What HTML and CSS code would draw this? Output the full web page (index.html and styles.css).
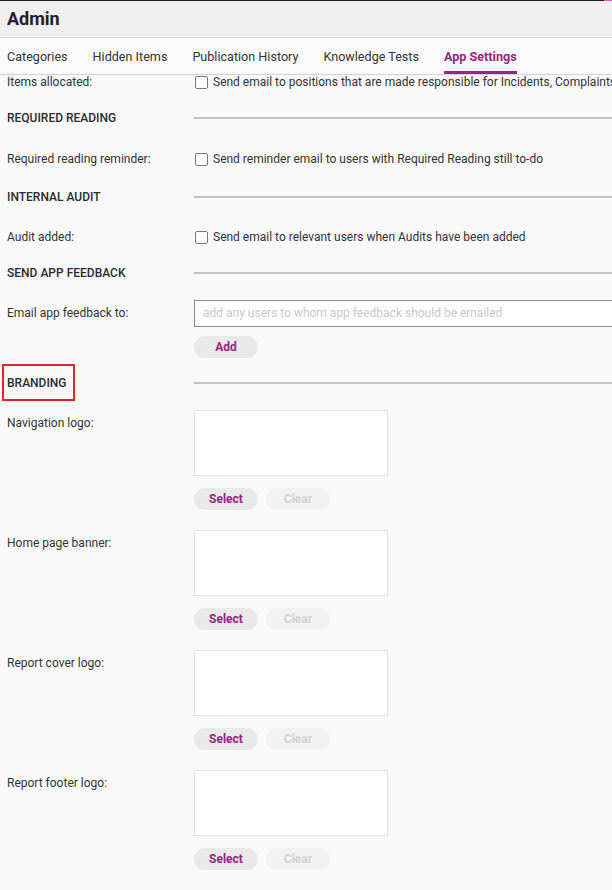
FILE: index.html
```html
<!DOCTYPE html>
<html>
<head>
  <meta charset="utf-8">
  <meta name="viewport" content="width=device-width, initial-scale=1">
  <title>Admin</title>
  <link rel="stylesheet" href="styles.css">
</head>
<body>
  <div class="topline"><div class="dark"></div><div class="pink"></div></div>
  <div class="header">Admin</div>
  <div class="tabs">
    <div class="tab">Categories</div>
    <div class="tab">Hidden Items</div>
    <div class="tab">Publication History</div>
    <div class="tab">Knowledge Tests</div>
    <div class="tab active">App Settings</div>
  </div>

  <div class="content">
    <div class="row first">
      <div class="label">Items allocated:</div>
      <label class="check"><span class="box"></span><span class="txt">Send email to positions that are made responsible for Incidents, Complaints, Hazards and Improvements</span></label>
    </div>

    <div class="heading h1"><span>REQUIRED READING</span><div class="line"></div></div>
    <div class="row r2">
      <div class="label">Required reading reminder:</div>
      <label class="check"><span class="box"></span><span class="txt">Send reminder email to users with Required Reading still to-do</span></label>
    </div>

    <div class="heading h2"><span>INTERNAL AUDIT</span><div class="line"></div></div>
    <div class="row r3">
      <div class="label">Audit added:</div>
      <label class="check"><span class="box"></span><span class="txt">Send email to relevant users when Audits have been added</span></label>
    </div>

    <div class="heading h3"><span>SEND APP FEEDBACK</span><div class="line"></div></div>
    <div class="row r4">
      <div class="label">Email app feedback to:</div>
      <div class="input">add any users to whom app feedback should be emailed</div>
    </div>
    <div class="row btnrow">
      <div></div>
      <div class="btns"><button class="btn">Add</button></div>
    </div>

    <div class="heading h4"><span class="marked">BRANDING</span><div class="line"></div></div>

    <div class="logo">
      <div class="label">Navigation logo:</div>
      <div>
        <div class="drop"></div>
        <div class="btns"><button class="btn">Select</button><button class="btn off">Clear</button></div>
      </div>
    </div>
    <div class="logo">
      <div class="label">Home page banner:</div>
      <div>
        <div class="drop"></div>
        <div class="btns"><button class="btn">Select</button><button class="btn off">Clear</button></div>
      </div>
    </div>
    <div class="logo">
      <div class="label">Report cover logo:</div>
      <div>
        <div class="drop"></div>
        <div class="btns"><button class="btn">Select</button><button class="btn off">Clear</button></div>
      </div>
    </div>
    <div class="logo">
      <div class="label">Report footer logo:</div>
      <div>
        <div class="drop"></div>
        <div class="btns"><button class="btn">Select</button><button class="btn off">Clear</button></div>
      </div>
    </div>
  </div>
</body>
</html>
```

FILE: styles.css
```css
* {
  margin: 0;
  padding: 0;
  box-sizing: border-box;
}

html, body {
  height: 100%;
}

body {
  font-family: Roboto, "Liberation Sans", sans-serif;
  font-size: 12px;
  color: #333;
  background: #f9f9f9;
  overflow: hidden;
}

.topline {
  display: flex;
  height: 1px;
}

.topline .dark {
  flex: 1;
  background: #1c1c1c;
}

.topline .pink {
  width: 8px;
  background: #e15fb3;
}

.header {
  height: 37px;
  padding-left: 7px;
  line-height: 36px;
  font-size: 18px;
  font-weight: bold;
  color: #222;
  background: #efefef;
  border-bottom: 1px solid #d6d6d6;
}

.tabs {
  display: flex;
  gap: 25px;
  height: 37px;
  padding-left: 7px;
  border-bottom: 1px solid #d2d2d2;
  background: #fafafa;
}

.tab {
  font-size: 12.6px;
  padding-top: 2px;
  line-height: 34px;
  color: #333;
  white-space: nowrap;
}

.tab.active {
  color: #9c2383;
  font-weight: bold;
  box-shadow: inset 0 -3px #9c2383;
}

.content {
  padding-left: 7px;
}

.row,
.logo {
  display: grid;
  grid-template-columns: 187px 1fr;
  align-items: center;
}

.label {
  line-height: 15px;
  white-space: nowrap;
}

.check {
  display: flex;
  align-items: center;
  gap: 5px;
  line-height: 15px;
  white-space: nowrap;
  padding-left: 1px;
  overflow: hidden;
}

.txt {
  overflow: hidden;
}

.box {
  flex: none;
  width: 13px;
  height: 13px;
  border: 1px solid #777;
  border-radius: 2px;
  background: #fff;
}

.heading {
  display: grid;
  grid-template-columns: 187px 1fr;
  align-items: center;
  height: 16px;
  font-weight: 500;
  font-size: 12px;
  color: #2b2b2b;
}

.line {
  height: 2px;
  background: #c2c2c2;
}

.marked {
  position: relative;
}

.marked::before {
  content: '';
  box-sizing: border-box;
  position: absolute;
  left: -5px;
  top: -12px;
  width: 73px;
  height: 37px;
  border: 2px solid #e3262b;
}

.row.first {
  height: 15px;
}

.h1 { margin-top: 20px; }
.r2 { margin-top: 26px; height: 15px; }
.h2 { margin-top: 22px; }
.r3 { margin-top: 25px; height: 15px; }
.h3 { margin-top: 20px; }
.r4 { margin-top: 19px; }
.btnrow { margin-top: 9px; }
.h4 { margin-top: 17px; }

.input {
  height: 27px;
  border: 1px solid #8a8a8a;
  border-right: none;
  background: #fff;
  padding-left: 8px;
  line-height: 25px;
  color: #c8c8c8;
  white-space: nowrap;
}

.btns {
  display: flex;
  gap: 8px;
}

.btn {
  width: 64px;
  height: 22px;
  border: none;
  border-radius: 11px;
  background: #e9e9e9;
  color: #9c2383;
  font-family: Roboto, "Liberation Sans", sans-serif;
  font-size: 12px;
  font-weight: bold;
}

.btn.off {
  background: #f2f2f2;
  color: #d2d2d2;
}

.logo {
  align-items: start;
  margin-top: 19px;
}

.logo + .logo {
  margin-top: 20px;
}

.logo .label {
  padding-top: 6px;
}

.drop {
  width: 194px;
  height: 66px;
  border: 1px solid #e2e2e2;
  background: #fff;
  margin-bottom: 12px;
}
```
